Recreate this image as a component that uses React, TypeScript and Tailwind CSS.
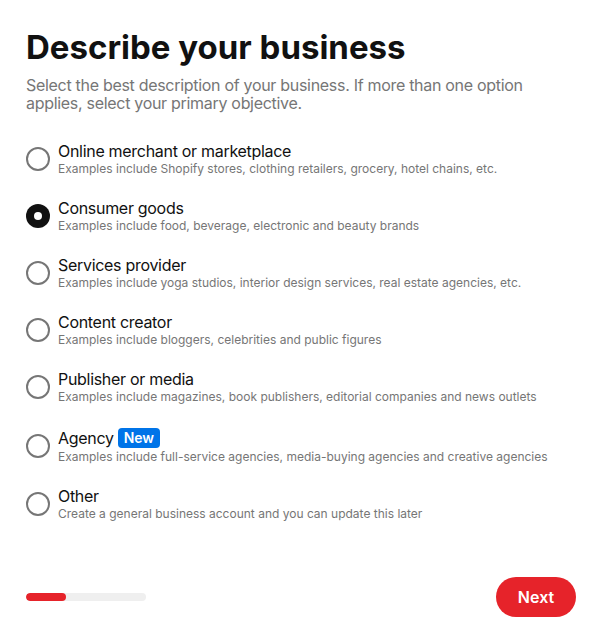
import React, { useState } from 'react';

const OPTIONS = [
  { title: 'Online merchant or marketplace', desc: 'Examples include Shopify stores, clothing retailers, grocery, hotel chains, etc.' },
  { title: 'Consumer goods', desc: 'Examples include food, beverage, electronic and beauty brands' },
  { title: 'Services provider', desc: 'Examples include yoga studios, interior design services, real estate agencies, etc.' },
  { title: 'Content creator', desc: 'Examples include bloggers, celebrities and public figures' },
  { title: 'Publisher or media', desc: 'Examples include magazines, book publishers, editorial companies and news outlets' },
  { title: 'Agency', desc: 'Examples include full-service agencies, media-buying agencies and creative agencies', badge: 'New' },
  { title: 'Other', desc: 'Create a general business account and you can update this later' },
];

export default function App() {
  const [selected, setSelected] = useState(1);

  return (
    <div className="w-[595px] h-[637px] bg-white flex flex-col pl-[26px] pr-[19px] pt-[27px] pb-[20px] font-['Inter','Liberation_Sans',sans-serif] text-[#111111]">
      {/* Header */}
      <h1 className="text-[33px] leading-[40px] font-bold">Describe your business</h1>
      <p className="mt-[9px] text-[16px] leading-[18px] tracking-[-0.3px] text-[#767676] pr-[7px]">
        Select the best description of your business. If more than one option applies, select your primary objective.
      </p>

      {/* Options */}
      <div className="mt-[29px] flex flex-col gap-[21px]">
        {OPTIONS.map((opt, idx) => (
          <button
            key={idx}
            onClick={() => setSelected(idx)}
            className="flex items-center gap-[8px] text-left cursor-pointer"
          >
            {selected === idx ? (
              <span className="w-[24px] h-[24px] rounded-full bg-[#111111] flex items-center justify-center shrink-0">
                <span className="w-[8px] h-[8px] rounded-full bg-white" />
              </span>
            ) : (
              <span className="w-[24px] h-[24px] rounded-full border-2 border-[#767676] shrink-0" />
            )}
            <span className="flex flex-col">
              <span className={`flex items-center gap-[4px] text-[16px] tracking-[-0.3px] ${opt.badge ? 'h-[23px]' : 'h-[20px]'}`}>
                {opt.title}
                {opt.badge && (
                  <span className="bg-[#0074e8] text-white text-[14px] leading-[20px] tracking-normal font-semibold px-[6px] rounded-[4px]">
                    {opt.badge}
                  </span>
                )}
              </span>
              <span className="text-[12px] leading-[16px] text-[#767676]">{opt.desc}</span>
            </span>
          </button>
        ))}
      </div>

      {/* Footer */}
      <div className="mt-auto flex items-center justify-between">
        <div className="w-[120px] h-[8px] rounded-full bg-[#efefef] overflow-hidden">
          <div className="w-[40px] h-full rounded-full bg-[#e6232a]" />
        </div>
        <button className="w-[80px] h-[40px] rounded-full bg-[#e6232a] text-white text-[16px] font-semibold">Next</button>
      </div>
    </div>
  );
}
